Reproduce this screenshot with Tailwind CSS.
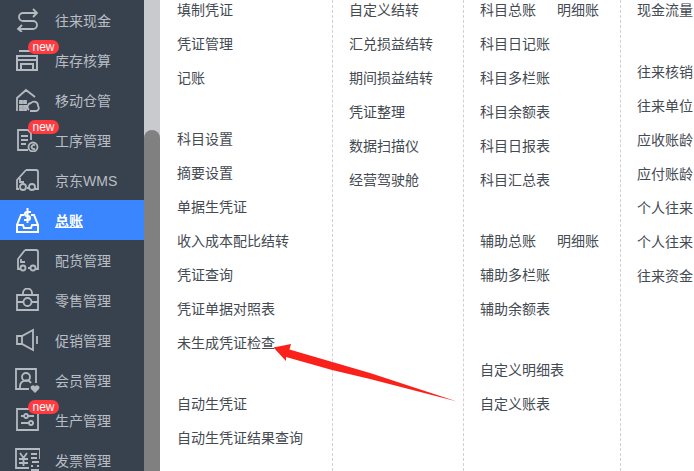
<!DOCTYPE html>
<html lang="zh">
<head>
    <meta charset="UTF-8">
    <title>总账</title>
    <script src="https://cdn.jsdelivr.net/npm/@tailwindcss/browser@4"></script>
</head>
<body class="bg-white overflow-hidden">
<div class="relative flex h-[471px] w-[694px] overflow-hidden font-['Liberation_Sans','Noto_Sans_CJK_SC',sans-serif]">
    <!-- menu -->
    <nav class="w-[144px] shrink-0 bg-[#38424f] text-[14px] text-[#b9bec4]">
        <a class="relative flex h-[40px] items-center">
            <svg class="ml-[16px] h-[24px] w-[24px]" viewBox="0 0 24 24" fill="none" stroke="#b5bac0" stroke-width="1.800"><path d="M17 1l4 4-4 4M21 5H7a4 4 0 0 0 0 8h10a4 4 0 0 1 0 8H2M6 17l-4 4 4 3"/></svg>
            <span class="ml-[15px] mt-[2px]">往来现金</span>
        </a>
        <a class="relative flex h-[40px] items-center">
            <span class="absolute left-[28px] top-0 h-[14px] w-[31px] rounded-full bg-[#ff3b3f] text-center text-[12px] leading-[14px] text-white">new</span>
            <svg class="ml-[16px] h-[24px] w-[24px]" viewBox="0 0 24 24" fill="none" stroke="#b5bac0" stroke-width="2"><path d="M3 3h12M1 8h20v14H1zM1 12h20M5 21v-5h12v5"/></svg>
            <span class="ml-[15px] mt-[2px]">库存核算</span>
        </a>
        <a class="relative flex h-[40px] items-center">
            <svg class="ml-[15px] h-[25px] w-[25px]" viewBox="0 0 25 25" fill="none" stroke="#b5bac0" stroke-width="1.800"><path d="M2 23V10l9-8 9 7M5 13h2v2H5zM9 13h2v2H9zM5 18h2v4H5zM9 18h2v4H9zM15 23h6a3 3 0 0 0 2-5 4 4 0 0 0-7-3 4 4 0 0 0-2 7"/></svg>
            <span class="ml-[15px] mt-[2px]">移动仓管</span>
        </a>
        <a class="relative flex h-[40px] items-center">
            <span class="absolute left-[28px] top-0 h-[14px] w-[31px] rounded-full bg-[#ff3b3f] text-center text-[12px] leading-[14px] text-white">new</span>
            <svg class="ml-[16px] h-[24px] w-[24px]" viewBox="0 0 24 24" fill="none" stroke="#b5bac0" stroke-width="1.800"><path d="M12 22H2V2h10l3 3v7M5 8h7M5 12h7M5 16h5M19 17.500a2 2 0 1 0 0 3"/><circle cx="17" cy="19" r="4.500"/></svg>
            <span class="ml-[15px] mt-[2px]">工序管理</span>
        </a>
        <a class="relative flex h-[40px] items-center">
            <svg class="ml-[15px] h-[24px] w-[25px]" viewBox="0 0 25 24" fill="none" stroke="#b5bac0" stroke-width="1.800"><path d="M11 2h10a2 2 0 0 1 2 2v17h-3M11 2L2 12v9h2M12 20h2M5 10v4h4"/><circle cx="8" cy="19" r="3"/><circle cx="17" cy="19" r="3"/></svg>
            <span class="ml-[15px] mt-[2px]">京东WMS</span>
        </a>
        <a class="relative flex h-[40px] items-center bg-[#3a86ff] font-bold text-white">
            <svg class="ml-[16px] h-[25px] w-[24px]" viewBox="0 0 24 25" fill="none" stroke="#fff" stroke-width="2"><path d="M8 7H5L1 17v7h21v-7L18 7h-3M1 17h6l1 3h7l1-3h6M15 4h-4a2 2 0 0 0 0 4h1a2 2 0 0 1 0 4H8M11.500 0v15"/></svg>
            <span class="ml-[15px] mt-[2px] underline">总账</span>
        </a>
        <a class="relative flex h-[40px] items-center">
            <svg class="ml-[16px] h-[24px] w-[24px]" viewBox="0 0 24 24" fill="none" stroke="#b5bac0" stroke-width="1.800"><path d="M9 2h11a2 2 0 0 1 2 2v17h-2M9 2L2 11v10h2M12 20h2M5 11v3h4"/><circle cx="7" cy="20" r="2.500"/><circle cx="17" cy="20" r="2.500"/></svg>
            <span class="ml-[15px] mt-[2px]">配货管理</span>
        </a>
        <a class="relative flex h-[40px] items-center">
            <svg class="ml-[16px] h-[24px] w-[24px]" viewBox="0 0 24 24" fill="none" stroke="#b5bac0" stroke-width="1.800"><path d="M1 7h21v15H1zM7 7V5a4.500 4.500 0 0 1 9 0v2M1 14h6M16 14h6"/><circle cx="11.500" cy="14" r="4"/></svg>
            <span class="ml-[15px] mt-[2px]">零售管理</span>
        </a>
        <a class="relative flex h-[40px] items-center">
            <svg class="ml-[16px] h-[24px] w-[24px]" viewBox="0 0 24 24" fill="none" stroke="#b5bac0" stroke-width="1.800"><path d="M1 8v8h5l11 6V2L6 8zM6 8v8M21 8v8"/></svg>
            <span class="ml-[15px] mt-[2px]">促销管理</span>
        </a>
        <a class="relative flex h-[40px] items-center">
            <svg class="ml-[15px] h-[25px] w-[25px]" viewBox="0 0 25 25" fill="none" stroke="#b5bac0" stroke-width="1.800"><path d="M14 21H1V1h20v14M5 20v-2a6 6 0 0 1 11-3"/><circle cx="11" cy="9" r="4"/><path d="M20 25l-4-4a2.300 2.300 0 0 1 4-2.500 2.300 2.300 0 0 1 4 2.500z" fill="#b5bac0" stroke="none"/></svg>
            <span class="ml-[15px] mt-[2px]">会员管理</span>
        </a>
        <a class="relative flex h-[40px] items-center">
            <span class="absolute left-[28px] top-0 h-[14px] w-[31px] rounded-full bg-[#ff3b3f] text-center text-[12px] leading-[14px] text-white">new</span>
            <svg class="ml-[16px] h-[24px] w-[24px]" viewBox="0 0 24 24" fill="none" stroke="#b5bac0" stroke-width="1.800"><path d="M1 1h21v21H1zM5 8h13M5 15h13"/><circle cx="10" cy="8" r="2" fill="#38424f"/><circle cx="15" cy="15" r="2" fill="#38424f"/></svg>
            <span class="ml-[15px] mt-[2px]">生产管理</span>
        </a>
        <a class="relative flex h-[40px] items-center">
            <svg class="ml-[15px] h-[25px] w-[25px]" viewBox="0 0 25 25" fill="none" stroke="#b5bac0" stroke-width="1.800"><path d="M14 20H1V1h24v10M5 5l3.500 5L12 5M4 11h9M4 15h9M8.500 10v8M16 6h6M16 10h6M17 14h7M16 18h2M22 18h2M16 22h8"/></svg>
            <span class="ml-[15px] mt-[2px]">发票管理</span>
        </a>
    </nav>

    <!-- scrollbar -->
    <div class="w-[16px] shrink-0 bg-[#c8cacd] pt-[130px]">
        <div class="h-full rounded-t-[8px] bg-[#808080]"></div>
    </div>

    <!-- columns -->
    <main class="flex flex-1 text-[14px] text-[#444a52]">
        <div class="w-[172px] -mt-[7px] pl-[17px]">
            <p class="flex h-[34px] items-center">填制凭证</p>
            <p class="flex h-[34px] items-center">凭证管理</p>
            <p class="mb-[27px] flex h-[34px] items-center">记账</p>
            <p class="flex h-[34px] items-center">科目设置</p>
            <p class="flex h-[34px] items-center">摘要设置</p>
            <p class="flex h-[34px] items-center">单据生凭证</p>
            <p class="flex h-[34px] items-center">收入成本配比结转</p>
            <p class="flex h-[34px] items-center">凭证查询</p>
            <p class="flex h-[34px] items-center">凭证单据对照表</p>
            <p class="mb-[27px] flex h-[34px] items-center">未生成凭证检查</p>
            <p class="flex h-[34px] items-center">自动生凭证</p>
            <p class="flex h-[34px] items-center">自动生凭证结果查询</p>
        </div>
        <div class="w-[131px] border-l border-dashed border-[#d0d0d0]">
            <div class="-mt-[7px] pl-[16px]">
                <p class="flex h-[34px] items-center">自定义结转</p>
                <p class="flex h-[34px] items-center">汇兑损益结转</p>
                <p class="flex h-[34px] items-center">期间损益结转</p>
                <p class="flex h-[34px] items-center">凭证整理</p>
                <p class="flex h-[34px] items-center">数据扫描仪</p>
                <p class="flex h-[34px] items-center">经营驾驶舱</p>
            </div>
        </div>
        <div class="w-[157px] border-l border-dashed border-[#d0d0d0]">
            <div class="-mt-[7px] pl-[16px]">
                <p class="flex h-[34px] items-center gap-[21px]"><span>科目总账</span><span>明细账</span></p>
                <p class="flex h-[34px] items-center">科目日记账</p>
                <p class="flex h-[34px] items-center">科目多栏账</p>
                <p class="flex h-[34px] items-center">科目余额表</p>
                <p class="flex h-[34px] items-center">科目日报表</p>
                <p class="mb-[27px] flex h-[34px] items-center">科目汇总表</p>
                <p class="flex h-[34px] items-center gap-[21px]"><span>辅助总账</span><span>明细账</span></p>
                <p class="flex h-[34px] items-center">辅助多栏账</p>
                <p class="mb-[27px] flex h-[34px] items-center">辅助余额表</p>
                <p class="flex h-[34px] items-center">自定义明细表</p>
                <p class="flex h-[34px] items-center">自定义账表</p>
            </div>
        </div>
        <div class="flex-1 border-l border-dashed border-[#d0d0d0]">
            <div class="-mt-[7px] pl-[16px]">
                <p class="mb-[28px] flex h-[34px] items-center">现金流量</p>
                <p class="flex h-[34px] items-center">往来核销</p>
                <p class="flex h-[34px] items-center">往来单位</p>
                <p class="flex h-[34px] items-center">应收账龄</p>
                <p class="flex h-[34px] items-center">应付账龄</p>
                <p class="flex h-[34px] items-center">个人往来</p>
                <p class="flex h-[34px] items-center">个人往来</p>
                <p class="flex h-[34px] items-center">往来资金</p>
            </div>
        </div>
    </main>

    <!-- annotation arrow -->
    <svg class="absolute left-0 top-0 h-[471px] w-[694px]" viewBox="0 0 694 471"><path d="M273.500 347.500L291 344 289.500 349.500 370 373 457 401.500 370 379 332 370 286 357 286 361z" fill="#f9211a"/></svg>
</div>
</body>
</html>
